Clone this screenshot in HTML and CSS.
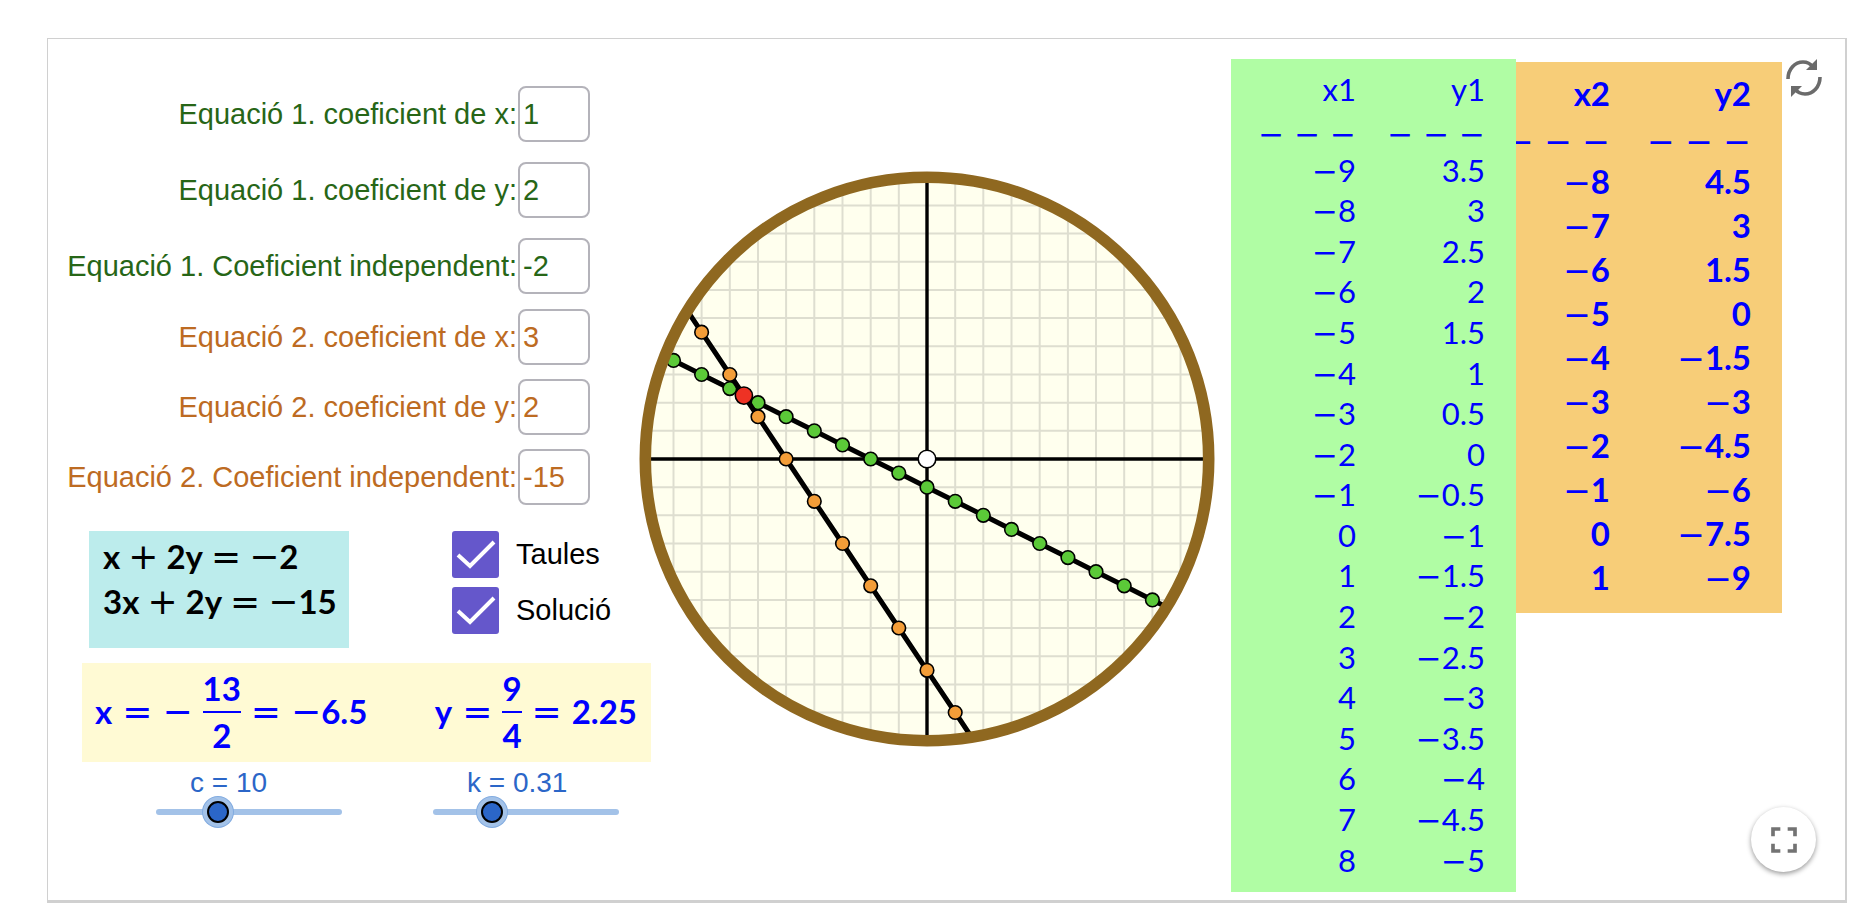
FILE: index.html
```
<!DOCTYPE html>
<html lang="ca">
    <head>
        <meta charset="utf-8">
        <title>Sistemes d'equacions</title>
        <link rel="stylesheet" href="styles.css">
    </head>
    <body>
        <main class="applet">
            <div class="controls">
                <div class="coefs eq1">
                    <div class="field">
                        <label for="a1">Equació 1. coeficient de x:</label>
                        <input type="text" id="a1" value="1">
                    </div>
                    <div class="field">
                        <label for="b1">Equació 1. coeficient de y:</label>
                        <input type="text" id="b1" value="2">
                    </div>
                    <div class="field">
                        <label for="c1">Equació 1. Coeficient independent:</label>
                        <input type="text" id="c1" value="-2">
                    </div>
                </div>
                <div class="coefs eq2">
                    <div class="field">
                        <label for="a2">Equació 2. coeficient de x:</label>
                        <input type="text" id="a2" value="3">
                    </div>
                    <div class="field">
                        <label for="b2">Equació 2. coeficient de y:</label>
                        <input type="text" id="b2" value="2">
                    </div>
                    <div class="field">
                        <label for="c2">Equació 2. Coeficient independent:</label>
                        <input type="text" id="c2" value="-15">
                    </div>
                </div>
                <div class="middle">
                    <div class="system">
                        <div class="formula">x<i>+</i>2y<i>=</i><span><i>−</i>2</span></div>
                        <div class="formula">3x<i>+</i>2y<i>=</i><span><i>−</i>15</span></div>
                    </div>
                    <div class="checks">
                        <label class="check"><input type="checkbox" checked>Taules</label>
                        <label class="check"><input type="checkbox" checked>Solució</label>
                    </div>
                </div>
                <div class="solution">
                    <div class="formula">x<i>=</i><i>−</i><span class="frac"><span>13</span><span>2</span></span><i>=</i><span><i>−</i>6.5</span></div>
                    <div class="formula">y<i>=</i><span class="frac"><span>9</span><span>4</span></span><i>=</i>2.25</div>
                </div>
                <div class="sliders">
                    <div class="slider">
                        <label for="c">c = 10</label>
                        <input type="range" id="c" min="0" max="32" value="10">
                    </div>
                    <div class="slider">
                        <label for="k">k = 0.31</label>
                        <input type="range" id="k" min="0" max="1.05" step="0.01" value="0.31">
                    </div>
                </div>
            </div>

            <!-- 1 unitat = 28.17 px, origen al centre -->
            <svg class="plot" viewBox="-288 -288 576 576">
                <defs>
                    <clipPath id="disc"><circle r="281"/></clipPath>
                    <marker id="green" markerUnits="userSpaceOnUse" markerWidth="20" markerHeight="20" viewBox="-10 -10 20 20">
                        <circle r="6.8" fill="#5bc938" stroke="#000" stroke-width="1.6"/>
                    </marker>
                    <marker id="orange" markerUnits="userSpaceOnUse" markerWidth="20" markerHeight="20" viewBox="-10 -10 20 20">
                        <circle r="6.8" fill="#f39d38" stroke="#000" stroke-width="1.6"/>
                    </marker>
                </defs>
                <circle r="281" fill="#ffffee"/>
                <g clip-path="url(#disc)">
                    <path stroke="#deded0" stroke-width="2" d="M-253.5-281V281M-225.4-281V281M-197.2-281V281M-169-281V281M-140.9-281V281M-112.7-281V281M-84.5-281V281M-56.3-281V281M-28.2-281V281M28.2-281V281M56.3-281V281M84.5-281V281M112.7-281V281M140.9-281V281M169-281V281M197.2-281V281M225.4-281V281M253.5-281V281M-281-253.5H281M-281-225.4H281M-281-197.2H281M-281-169H281M-281-140.9H281M-281-112.7H281M-281-84.5H281M-281-56.3H281M-281-28.2H281M-281 28.2H281M-281 56.3H281M-281 84.5H281M-281 112.7H281M-281 140.9H281M-281 169H281M-281 197.2H281M-281 225.4H281M-281 253.5H281"/>
                    <path stroke="#000" stroke-width="3.4" d="M-281 0H281M0-281V281"/>
                    <polyline class="line" marker-mid="url(#green)" points="-281.7,-112.7 -253.5,-98.6 -225.4,-84.5 -197.2,-70.4 -169,-56.3 -140.9,-42.3 -112.7,-28.2 -84.5,-14.1 -56.3,0 -28.2,14.1 0,28.2 28.2,42.3 56.3,56.3 84.5,70.4 112.7,84.5 140.9,98.6 169,112.7 197.2,126.8 225.4,140.9 253.5,155"/>
                    <polyline class="line" marker-mid="url(#orange)" points="-253.5,-169 -225.4,-126.8 -197.2,-84.5 -169,-42.3 -140.9,0 -112.7,42.3 -84.5,84.5 -56.3,126.8 -28.2,169 0,211.3 28.2,253.5 56.3,295.8"/>
                    <circle cx="-183.1" cy="-63.4" r="8.6" fill="#ee3224" stroke="#000" stroke-width="1.6"/>
                    <circle r="8.8" fill="#fff" stroke="#000" stroke-width="1.6"/>
                </g>
                <circle r="281.7" fill="none" stroke="#8f6820" stroke-width="11.6"/>
            </svg>

            <table class="values values1">
                <thead>
                    <tr><th>x1</th><th>y1</th></tr>
                </thead>
                <tbody>
                    <tr class="rule"><td>− − −</td><td>− − −</td></tr>
                    <tr><td><i>−</i>9</td><td>3.5</td></tr>
                    <tr><td><i>−</i>8</td><td>3</td></tr>
                    <tr><td><i>−</i>7</td><td>2.5</td></tr>
                    <tr><td><i>−</i>6</td><td>2</td></tr>
                    <tr><td><i>−</i>5</td><td>1.5</td></tr>
                    <tr><td><i>−</i>4</td><td>1</td></tr>
                    <tr><td><i>−</i>3</td><td>0.5</td></tr>
                    <tr><td><i>−</i>2</td><td>0</td></tr>
                    <tr><td><i>−</i>1</td><td><i>−</i>0.5</td></tr>
                    <tr><td>0</td><td><i>−</i>1</td></tr>
                    <tr><td>1</td><td><i>−</i>1.5</td></tr>
                    <tr><td>2</td><td><i>−</i>2</td></tr>
                    <tr><td>3</td><td><i>−</i>2.5</td></tr>
                    <tr><td>4</td><td><i>−</i>3</td></tr>
                    <tr><td>5</td><td><i>−</i>3.5</td></tr>
                    <tr><td>6</td><td><i>−</i>4</td></tr>
                    <tr><td>7</td><td><i>−</i>4.5</td></tr>
                    <tr><td>8</td><td><i>−</i>5</td></tr>
                </tbody>
            </table>
            <table class="values values2">
                <thead>
                    <tr><th>x2</th><th>y2</th></tr>
                </thead>
                <tbody>
                    <tr class="rule"><td>− − −</td><td>− − −</td></tr>
                    <tr><td><i>−</i>8</td><td>4.5</td></tr>
                    <tr><td><i>−</i>7</td><td>3</td></tr>
                    <tr><td><i>−</i>6</td><td>1.5</td></tr>
                    <tr><td><i>−</i>5</td><td>0</td></tr>
                    <tr><td><i>−</i>4</td><td><i>−</i>1.5</td></tr>
                    <tr><td><i>−</i>3</td><td><i>−</i>3</td></tr>
                    <tr><td><i>−</i>2</td><td><i>−</i>4.5</td></tr>
                    <tr><td><i>−</i>1</td><td><i>−</i>6</td></tr>
                    <tr><td>0</td><td><i>−</i>7.5</td></tr>
                    <tr><td>1</td><td><i>−</i>9</td></tr>
                </tbody>
            </table>

            <button class="reset" type="button" aria-label="Reinicia">
                <svg viewBox="0 0 36 38" width="36" height="38">
                    <path d="M2 20C2 10 9 3 17 3C21 3 24 4 27 8" fill="none" stroke="#6b6b6b" stroke-width="3.6"/>
                    <path d="M31 0V11H20Z" fill="#6b6b6b"/>
                    <path d="M34 18C34 28 27 35 19 35C15 35 12 34 9 30" fill="none" stroke="#6b6b6b" stroke-width="3.6"/>
                    <path d="M5 38V27H16Z" fill="#6b6b6b"/>
                </svg>
            </button>
            <button class="fullscreen" type="button" aria-label="Pantalla completa">
                <svg viewBox="0 0 24 24" width="44" height="44">
                    <path d="M7 14H5v5h5v-2H7v-3zM5 10h2V7h3V5H5v5zm12 7h-3v2h5v-5h-2v3zM14 5v2h3v3h2V5h-5z" fill="#737373"/>
                </svg>
            </button>
        </main>
    </body>
</html>
```
FILE: styles.css
```
*{
    box-sizing: border-box;
}
body{
    margin: 0;
    padding: 38px 21px 22px 47px;
    background-color: #fff;
    font-family: "Liberation Sans", Arial, sans-serif;
    font-size: 29px;
}
.applet{
    position: relative;
    display: flex;
    align-items: flex-start;
    border: 1px solid #d0d0d0;
    border-right-width: 2px;
    border-bottom-width: 3px;
    padding-bottom: 8px;
}
/* columna esquerra */
.controls{
    flex: 0 0 591px;
    padding-top: 47px;
}
.coefs{
    display: flex;
    flex-direction: column;
    align-items: flex-end;
    padding-right: 49px;
}
.eq1{
    gap: 20px;
    color: #276617;
}
.eq2{
    gap: 14px;
    margin-top: 15px;
    color: #bd6b22;
}
.field{
    display: flex;
    align-items: center;
}
.field input{
    width: 72px;
    height: 56px;
    margin-left: 1px;
    padding: 0 3px;
    border: 2px solid #b4b3ba;
    border-radius: 8px;
    background-color: #fff;
    color: inherit;
    font: inherit;
}
.middle{
    display: flex;
    justify-content: space-between;
    margin: 26px 0 15px;
    padding: 0 29px 0 41px;
}
.system{
    width: 260px;
    height: 117px;
    padding: 3px 14px;
    background-color: #bcecec;
}
.formula{
    display: flex;
    align-items: center;
    gap: 10px;
    font-family: Lato, sans-serif;
    font-size: 33px;
    font-weight: bold;
    line-height: 45px;
    white-space: nowrap;
}
.system .formula{
    gap: 8px;
}
i{
    font-family: "DejaVu Sans", sans-serif;
    font-style: normal;
    font-weight: normal;
    line-height: 0;
}
.formula i{
    font-size: 36px;
}
.checks{
    display: flex;
    flex-direction: column;
    gap: 9px;
    width: 158px;
}
.check{
    display: flex;
    align-items: center;
    gap: 17px;
}
.check input{
    flex: none;
    appearance: none;
    width: 47px;
    height: 47px;
    margin: 0;
    border-radius: 3px;
    background: #6557cb url("data:image/svg+xml,%3Csvg xmlns='http://www.w3.org/2000/svg' viewBox='0 0 47 47'%3E%3Cpath d='M6 24l12 11L42 11' fill='none' stroke='%23fff' stroke-width='4'/%3E%3C/svg%3E");
}
.solution{
    display: flex;
    justify-content: space-between;
    align-items: center;
    height: 99px;
    margin: 0 -12px 0 34px;
    padding: 0 14px 2px 13px;
    background-color: #fffad4;
    color: #00f;
}
.frac{
    display: flex;
    flex-direction: column;
    text-align: center;
}
.frac span:first-child{
    border-bottom: 2px solid #00f;
}
.sliders{
    display: flex;
    gap: 91px;
    padding: 3px 0 0 108px;
    color: #2b66c8;
}
.slider{
    width: 186px;
}
.slider label{
    display: block;
    padding-left: 34px;
    font-size: 28px;
    line-height: 36px;
}
.slider input{
    display: block;
    appearance: none;
    width: 100%;
    height: 22px;
    margin: 0;
    background: none;
}
.slider input::-webkit-slider-runnable-track{
    height: 6px;
    border-radius: 3px;
    background-color: #a3c2e8;
}
.slider input::-webkit-slider-thumb{
    appearance: none;
    width: 22px;
    height: 22px;
    margin-top: -8px;
    border: 2px solid #000;
    border-radius: 50%;
    background-color: #2b66c8;
    box-shadow: 0 0 0 4px #a3c2e8, 0 0 0 5px #81abe0;
}
/* gràfic */
.plot{
    flex: 0 1 576px;
    min-width: 0;
    margin-top: 132px;
}
.line{
    fill: none;
    stroke: #000;
    stroke-width: 5;
}
/* taules */
.values{
    border-collapse: collapse;
    font-family: Lato, sans-serif;
    color: #00f;
    text-align: right;
    white-space: nowrap;
}
.values th, .values td{
    padding: 0 31px 0 0;
}
.values th{
    font-weight: inherit;
}
.values .rule{
    font-family: "DejaVu Sans", sans-serif;
    font-weight: normal;
}
.values1{
    position: relative;
    z-index: 1;
    width: 285px;
    height: 833px;
    margin: 20px 0 0 16px;
    background-color: #b0fda4;
    border-bottom: 12px solid #b0fda4;
    font-size: 31px;
}
.values1 td{
    height: 40px;
    line-height: 40px;
}
.values1 th{
    height: 60px;
}
.values1 .rule td{
    height: 30px;
    line-height: 30px;
}
.values2{
    width: 282px;
    margin: 23px 0 0 -16px;
    background-color: #f7cd78;
    border-bottom: 14px solid #f7cd78;
    font-size: 33px;
    font-weight: bold;
}
.values2 td{
    height: 44px;
    line-height: 44px;
}
.values2 th{
    height: 62px;
}
.values2 .rule td{
    height: 35px;
    line-height: 35px;
}
.values1 td:last-child{
    width: 129px;
}
.values2 td:last-child{
    width: 141px;
}
/* botons */
.reset{
    margin: 20px 0 0 4px;
    padding: 0;
    border: 0;
    background: none;
}
.reset svg, .fullscreen svg{
    display: block;
}
.fullscreen{
    position: absolute;
    right: 29px;
    bottom: 28px;
    display: grid;
    place-items: center;
    width: 65px;
    height: 65px;
    border: 0;
    border-radius: 50%;
    background-color: #fff;
    box-shadow: 0 2px 5px rgba(0,0,0,0.4);
}
```
